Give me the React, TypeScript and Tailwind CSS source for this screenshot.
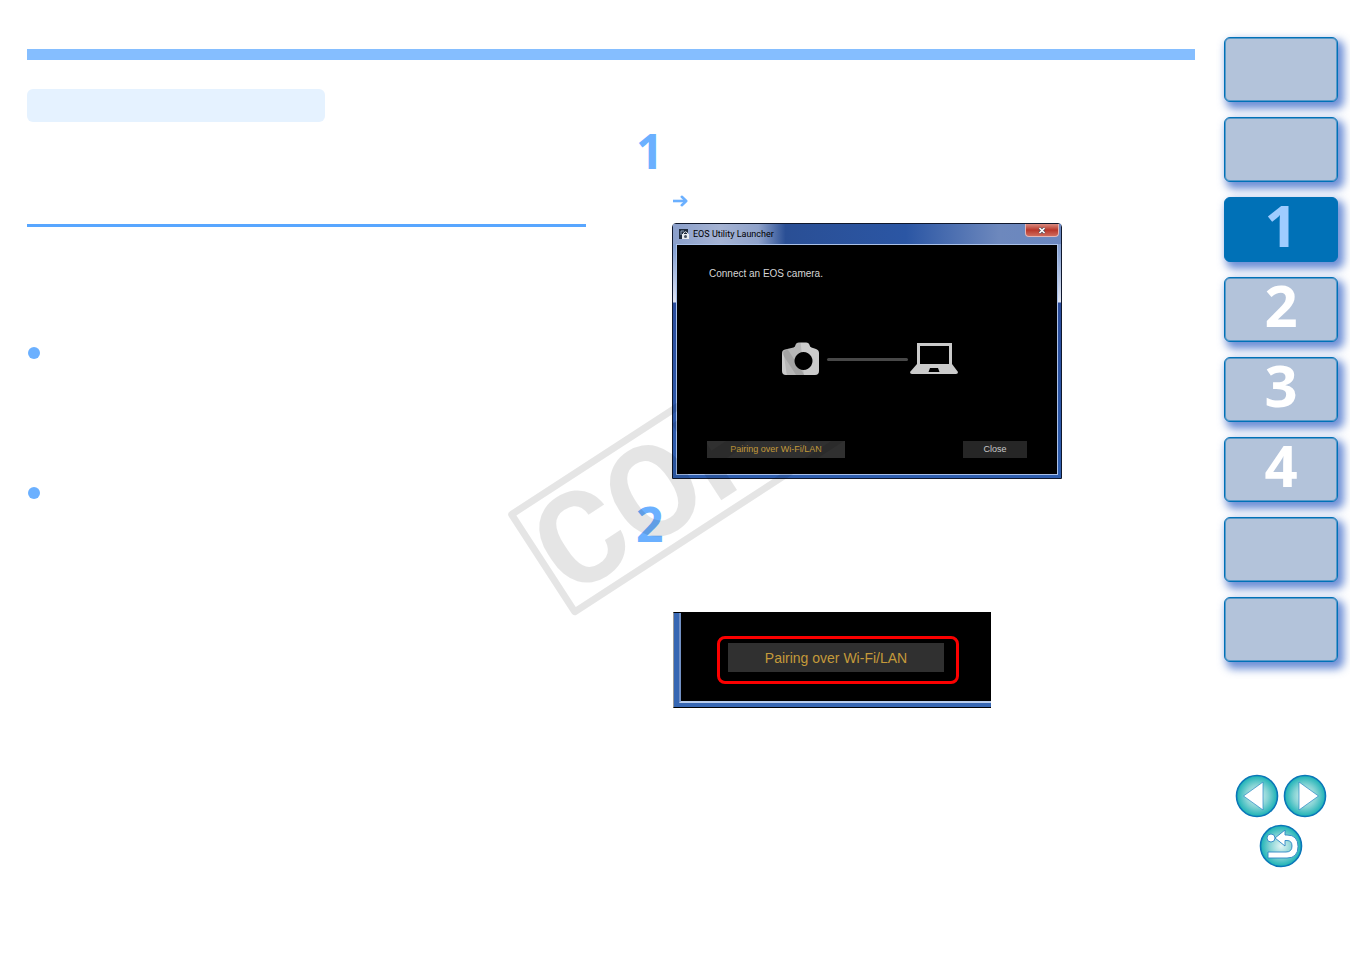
import type { ReactNode } from 'react';

type Tab = { id: string; label: string; digit?: string; active?: boolean };

const tabs: Tab[] = [
  { id: 'cover', label: 'Cover' },
  { id: 'contents', label: 'Contents' },
  { id: 'chapter-1', label: 'Chapter 1', digit: '1', active: true },
  { id: 'chapter-2', label: 'Chapter 2', digit: '2' },
  { id: 'chapter-3', label: 'Chapter 3', digit: '3' },
  { id: 'chapter-4', label: 'Chapter 4', digit: '4' },
  { id: 'reference', label: 'Reference' },
  { id: 'index', label: 'Index' },
];

function ChapterTab({ tab }: { tab: Tab }) {
  return (
    <a
      href={`#${tab.id}`}
      aria-label={tab.label}
      className={`flex h-[65px] items-start justify-center rounded-md border border-[#0071b7] text-[58px] leading-[54px] font-bold shadow-[inset_0_0_0_1px_rgba(0,113,183,0.5),4px_5px_8px_2px_rgba(60,105,200,0.75)] ${
        tab.active ? 'bg-[#0071b7] text-[#9fccff]' : 'bg-[#b3c3da] text-white'
      }`}
    >
      {tab.digit}
    </a>
  );
}

function RoundLink({ href, label, children }: { href: string; label: string; children: ReactNode }) {
  return (
    <a href={href} aria-label={label}>
      <svg width="44" height="44" viewBox="0 0 44 44">
        <defs>
          <radialGradient id={`fill-${label}`}>
            <stop offset="0" stopColor="#e2f5f5" />
            <stop offset="0.55" stopColor="#84d3d4" />
            <stop offset="1" stopColor="#19b1b5" />
          </radialGradient>
        </defs>
        <circle cx="22" cy="22" r="20.5" fill={`url(#fill-${label})`} stroke="#0a76b8" strokeWidth="1.6" />
        {children}
      </svg>
    </a>
  );
}

function Camera() {
  return (
    <svg width="38" height="34" viewBox="0 0 38 34" fill="#cbcbcb">
      <path
        fillRule="evenodd"
        d="M4 7.5 L12.5 5.5 Q14 5 14.5 3 Q15 .5 18 .5 H25 Q28 .5 28.5 3 Q29 5 30.5 5.5 L35 7 Q38 8 38 11 V29 Q38 33 34 33 H5 Q1 33 1 29 V11 Q1 8 4 7.5 Z M22.5 10 a9 9 0 1 0 .01 0 Z"
      />
    </svg>
  );
}

function Laptop() {
  return (
    <svg width="48" height="32" viewBox="0 0 48 32" fill="#cbcbcb">
      <path fillRule="evenodd" d="M7 0 H42 V21 L48 29 Q48 31 46 31 H2 Q0 31 0 29 L7 21 Z M10 3 V21 H39 V3 Z M20 25 L18.5 29 H29.5 L28 25 Z" />
    </svg>
  );
}

function LauncherWindow() {
  return (
    <div className="w-[390px] rounded-t border border-[#10182c] bg-[linear-gradient(#6f8fc8_0px,#8ba5d4_30px,#dfe4f2_78px,#2a4c9c_79px,#2f5fb0_100%)]">
      <div className="flex h-5 items-start justify-between bg-[linear-gradient(90deg,#8a9fcb_0%,#a5b3d3_12%,#8fa2ca_22%,#2a4f95_29%,#2b56a4_60%,#6d88bd_84%,#6a87c0_100%)]">
        <div className="flex items-center gap-1 pt-1 pl-1.5">
          <svg width="10" height="11" viewBox="0 0 10 11">
            <rect width="9" height="10" fill="#1e2a3c" />
            <path d="M2 2 H5 M2 2 V6" stroke="#8da0b8" />
            <path d="M4.5 5 V4 Q6.5 1.5 8.5 4 V5" fill="none" stroke="#e8ebf0" />
            <rect x="3" y="5" width="7" height="5" fill="#e8ebf0" />
            <circle cx="6.5" cy="7.5" r="1.5" fill="#44505f" />
          </svg>
          <span className="font-[Roboto,sans-serif] text-[9px] leading-3 text-black">EOS Utility Launcher</span>
        </div>
        <button
          type="button"
          aria-label="Close window"
          className="mr-0.5 flex h-[13px] w-[34px] items-center justify-center rounded-b-sm border border-t-0 border-[#e3b5b5] bg-linear-to-b from-[#d98a80] via-[#b8352a] to-[#cf6a5c]"
        >
          <svg width="8" height="7" viewBox="0 0 8 7">
            <path d="M1.5 1 L6.5 6 M6.5 1 L1.5 6" stroke="#4a4a58" strokeWidth="3" />
            <path d="M1.5 1 L6.5 6 M6.5 1 L1.5 6" stroke="#fff" strokeWidth="1.7" />
          </svg>
        </button>
      </div>
      <div className="mx-[3px] mb-[3px] border border-[#a9c0e8] bg-black px-[30px] pt-[21px] pb-4">
        <p className="pl-0.5 text-[10px] leading-4 text-[#d6d6d6]">Connect an EOS camera.</p>
        <div className="mt-[60px] flex items-center justify-center pl-1">
          <Camera />
          <div className="mr-0.5 ml-2 h-[3px] w-[81px] rounded-full bg-[#484848]" />
          <Laptop />
        </div>
        <div className="mt-[65px] flex justify-between text-[9px]">
          <button type="button" className="h-[17px] w-[138px] bg-[#303030] text-[#c49a3a]">
            Pairing over Wi-Fi/LAN
          </button>
          <button type="button" className="h-[17px] w-16 bg-[#262626] text-[#c9c9c9]">
            Close
          </button>
        </div>
      </div>
    </div>
  );
}

function PairingDetail() {
  return (
    <div className="w-[318px] border-y border-l border-t-black border-b-black border-l-[#9a9a9a] bg-[#3767b3] pb-1 pl-[5px]">
      <div className="border-b-2 border-l-2 border-b-[#b9cdec] border-l-[#7290c4] bg-black pt-[23px] pb-[17px] pl-9">
        <div className="w-[242px] rounded-lg border-3 border-[#fb0000] pt-1 pr-3 pb-[9px] pl-2">
          <button type="button" className="h-[29px] w-full bg-[#303030] text-sm text-[#c49a3a]">
            Pairing over Wi-Fi/LAN
          </button>
        </div>
      </div>
    </div>
  );
}

function StepNumber({ children }: { children: ReactNode }) {
  return <h2 className="font-['Open_Sans',sans-serif] text-5xl leading-[48px] font-bold text-[#6bb0ff]">{children}</h2>;
}

export default function App() {
  return (
    <div className="flex gap-[29px] bg-white pr-3 pl-[27px] font-['Liberation_Sans',Arial,sans-serif]">
      <main className="flex-1 pt-[49px]">
        <div className="h-[11px] bg-[#85beff]" />
        <div className="grid grid-cols-2 gap-[50px]">
          {/* Left column */}
          <section className="pt-[29px]">
            <div className="h-[33px] w-[298px] rounded-md bg-[#e5f2ff]" />
            <div className="mt-[102px] h-[3px] bg-[#58a6ff]" />
            <ul className="mt-[120px] flex flex-col gap-32 pl-px">
              <li className="size-3 rounded-full bg-[#6bb0ff]" />
              <li className="size-3 rounded-full bg-[#6bb0ff]" />
            </ul>
          </section>

          {/* Steps */}
          <section className="relative pt-[67px]">
            <StepNumber>1</StepNumber>
            <div className="pt-5 pl-9">
              <svg width="17" height="12" viewBox="0 0 17 12" fill="none" stroke="#6bb0ff" strokeWidth="2.6">
                <path d="M1 6 H14" />
                <path d="M9.8 1.8 L14.2 6 L9.8 10.2" strokeLinecap="round" strokeLinejoin="round" />
              </svg>
              <div className="pt-4">
                <LauncherWindow />
              </div>
            </div>
            <div className="pt-[21px]">
              <StepNumber>2</StepNumber>
            </div>
            <div className="pt-16 pl-[37px]">
              <PairingDetail />
            </div>

            {/* Watermark */}
            <div className="pointer-events-none absolute top-[355px] -left-[122px] flex h-[123px] w-[325px] -rotate-33 items-center rounded border-[7px] border-black/10 font-[Roboto,sans-serif] text-[128px] leading-none font-bold text-black/10">
              COPY
            </div>
          </section>
        </div>
      </main>

      {/* Chapter tabs */}
      <aside className="w-[114px] pt-[37px] font-['Open_Sans',sans-serif]">
        <nav className="flex flex-col gap-[15px]">
          {tabs.map((tab) => (
            <ChapterTab key={tab.id} tab={tab} />
          ))}
        </nav>
        <nav className="mt-28 flex flex-wrap justify-center gap-x-1 gap-y-1.5">
          <RoundLink href="#previous" label="previous">
            <path d="M8.5 22 L28 8 V36 Z" fill="#fff" stroke="#2a86c4" strokeWidth="0.7" />
          </RoundLink>
          <RoundLink href="#next" label="next">
            <path d="M35.5 22 L16 8 V36 Z" fill="#fff" stroke="#2a86c4" strokeWidth="0.7" />
          </RoundLink>
          <RoundLink href="#back" label="back">
            <g fill="#fff" stroke="#2a86c4" strokeWidth="0.9">
              <circle cx="12" cy="14" r="4" />
              <path d="M16 14 L26 6 V11 H28 Q39 11 39 22.5 Q39 34 28 34 H9 V28 H27 Q33 28 33 22 Q33 16.5 28 16.5 H26 V22 Z" />
            </g>
          </RoundLink>
        </nav>
      </aside>
    </div>
  );
}
